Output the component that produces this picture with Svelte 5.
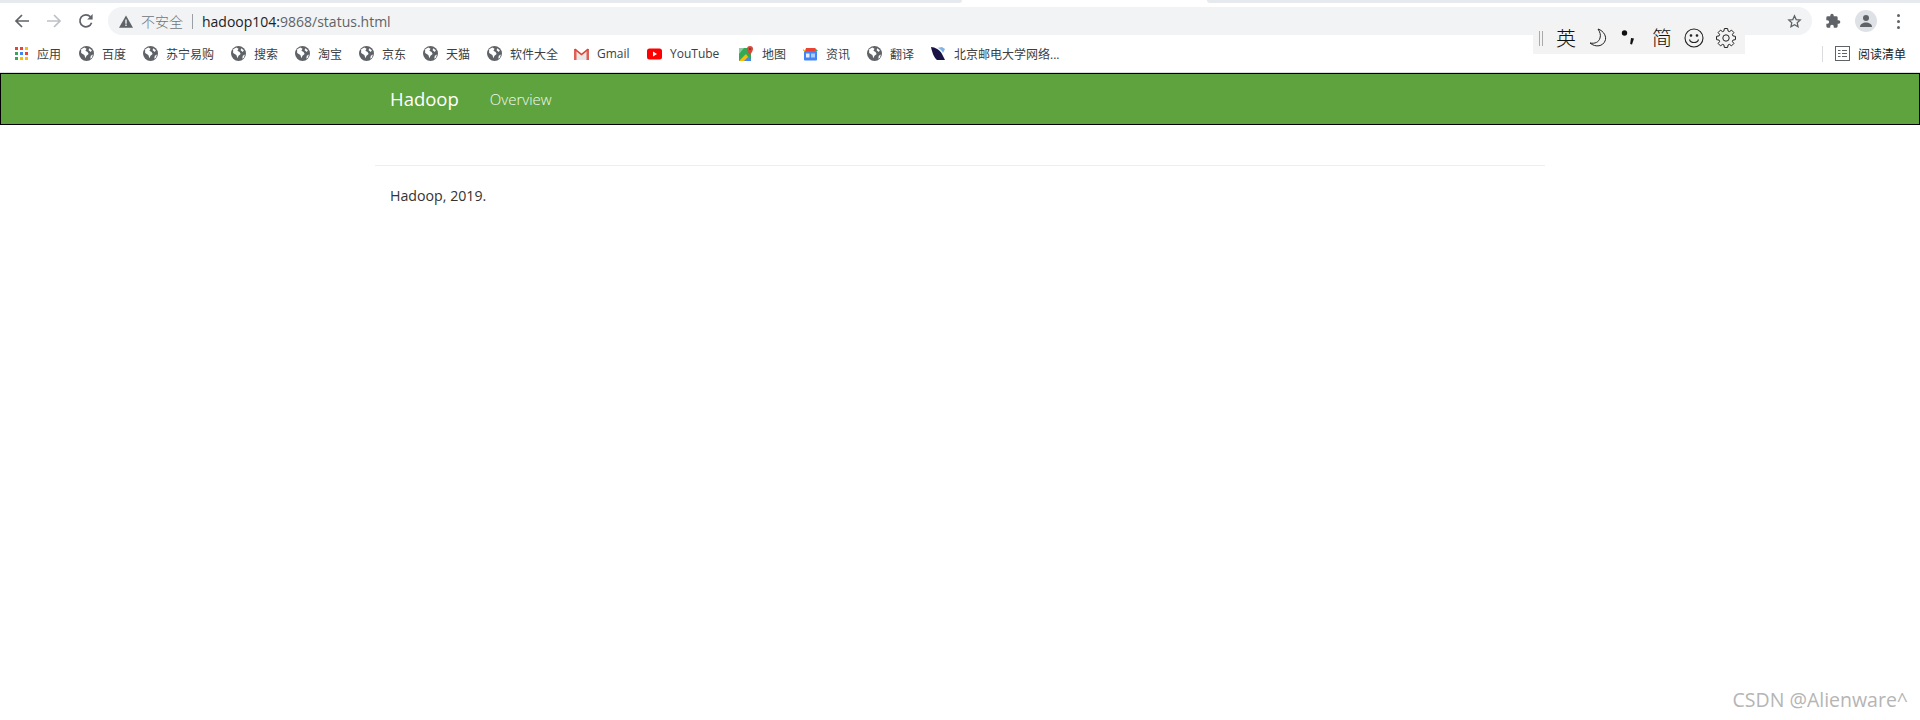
<script lang="ts">
	const bookmarks = [
		{ label: '百度', icon: 'globe', w: 64 },
		{ label: '苏宁易购', icon: 'globe', w: 88 },
		{ label: '搜索', icon: 'globe', w: 64 },
		{ label: '淘宝', icon: 'globe', w: 64 },
		{ label: '京东', icon: 'globe', w: 64 },
		{ label: '天猫', icon: 'globe', w: 64 },
		{ label: '软件大全', icon: 'globe', w: 87 },
		{ label: 'Gmail', icon: 'gmail', w: 73 },
		{ label: 'YouTube', icon: 'youtube', w: 92 },
		{ label: '地图', icon: 'maps', w: 64 },
		{ label: '资讯', icon: 'news', w: 64 },
		{ label: '翻译', icon: 'globe', w: 64 },
		{ label: '北京邮电大学网络...', icon: 'bupt', w: 150 }
	];

	// 8 tooth gear outline for the IME settings icon
	function gearPoints(): string {
		const pts: string[] = [];
		for (let i = 0; i < 8; i++) {
			const a = (i * Math.PI) / 4;
			for (const [r, d] of [
				[7.2, -0.3],
				[9.6, -0.17],
				[9.6, 0.17],
				[7.2, 0.3]
			]) {
				pts.push(`${(10 + r * Math.cos(a + d)).toFixed(2)},${(10 + r * Math.sin(a + d)).toFixed(2)}`);
			}
		}
		return pts.join(' ');
	}
</script>

<div class="page">
	<div class="tabstrip">
		<div class="tab-left"></div>
		<div class="tab-right"></div>
	</div>

	<!-- browser toolbar: nav buttons, address bar, extensions -->
	<div class="toolbar">
		<svg class="nav back" width="16" height="16" viewBox="0 0 16 16" fill="none" stroke="#5f6368" stroke-width="1.7">
			<path d="M15 8H2M8 2L2 8l6 6" />
		</svg>
		<svg class="nav" width="16" height="16" viewBox="0 0 16 16" fill="none" stroke="#bdc1c6" stroke-width="1.7">
			<path d="M1 8h13M8 2l6 6-6 6" />
		</svg>
		<svg class="nav reload" width="16" height="16" viewBox="0 0 16 16" fill="none" stroke="#5f6368" stroke-width="1.7">
			<path d="M13.6 9.8A6 6 0 1 1 12.4 3.8" />
			<path d="M14.6 1v5.4H9.2z" fill="#5f6368" stroke="none" />
		</svg>
		<div class="omnibox">
			<svg class="warn" width="14" height="13" viewBox="0 0 14 13">
				<path d="M7 0.5L14 12.7H0z" fill="#5f6368" />
				<path d="M6.3 4.6h1.4v4.2H6.3zM6.3 9.6h1.4v1.4H6.3z" fill="#f1f3f4" />
			</svg>
			<span class="insecure">不安全</span>
			<span class="sep"></span>
			<span class="url"><span class="host">hadoop104:</span>9868/status.html</span>
			<svg class="star" width="15" height="15" viewBox="0 0 24 24" fill="none" stroke="#5f6368" stroke-width="2">
				<path d="M12 3l2.7 6 6.500.7-4.900 4.300 1.400 6.400L12 17.100 6.300 20.400l1.400-6.400-4.900-4.300 6.500-.7z" />
			</svg>
		</div>
		<svg class="puzzle" width="16" height="16" viewBox="0 0 24 24" fill="#5f6368">
			<path d="M20.500 11H19V7a2 2 0 0 0-2-2h-4V3.500a2.500 2.500 0 0 0-5 0V5H4a2 2 0 0 0-2 2v3.800h1.500a2.700 2.700 0 0 1 0 5.400H2V20a2 2 0 0 0 2 2h3.800v-1.500a2.700 2.700 0 0 1 5.400 0V22H17a2 2 0 0 0 2-2v-4h1.500a2.500 2.500 0 0 0 0-5z" />
		</svg>
		<div class="avatar">
			<svg width="14" height="14" viewBox="0 0 14 14" fill="#5f6368">
				<circle cx="7" cy="4" r="3" />
				<path d="M1 13c0-3 3-4.500 6-4.500s6 1.500 6 4.500z" />
			</svg>
		</div>
		<div class="dots"><i></i><i></i><i></i></div>
	</div>

	<!-- bookmarks bar -->
	<div class="bookmarks">
		<div class="bm apps">
			<svg width="14" height="14" viewBox="0 0 14 14">
				<rect x="0" y="0" width="3" height="3" fill="#ea4335" />
				<rect x="5" y="0" width="3" height="3" fill="#ea4335" />
				<rect x="10" y="0" width="3" height="3" fill="#fbbc04" />
				<rect x="0" y="5" width="3" height="3" fill="#34a853" />
				<rect x="5" y="5" width="3" height="3" fill="#4285f4" />
				<rect x="10" y="5" width="3" height="3" fill="#ea4335" />
				<rect x="0" y="10" width="3" height="3" fill="#34a853" />
				<rect x="5" y="10" width="3" height="3" fill="#fbbc04" />
				<rect x="10" y="10" width="3" height="3" fill="#fbbc04" />
			</svg>
			<span>应用</span>
		</div>
		{#each bookmarks as b}
			<div class="bm" style="width: {b.w}px">
				{#if b.icon === 'globe'}
					<svg width="15" height="15" viewBox="0 0 14 14">
						<circle cx="7" cy="7" r="7" fill="#5f6368" />
						<path d="M2 3l3-1.500 2 1-1 2 2 1 1 2-2 1.500-1 2.500-1-3-3-2zM9.500 2l2.500 2-1 1.500-2-1.500zM11 9l2-1-1 3-1.500 1z" fill="#fff" />
					</svg>
				{:else if b.icon === 'gmail'}
					<svg width="15" height="12" viewBox="0 0 15 12">
						<path d="M0 1v11h15V1L7.500 7z" fill="#e8e8e8" />
						<path d="M0 12V1.500L1 1l1.500.5V12zM15 12V1.500L14 1l-1.500.5V12z" fill="#e06055" />
						<path d="M0 1.500L1.200 0.500 7.500 5.500 13.800 0.500 15 1.500 7.500 7.500z" fill="#db4437" />
					</svg>
				{:else if b.icon === 'youtube'}
					<svg width="15" height="12" viewBox="0 0 15 12">
						<rect x="0" y="0.500" width="15" height="11" rx="2.500" fill="#f00" />
						<path d="M6 3.500L10 6 6 8.500z" fill="#fff" />
					</svg>
				{:else if b.icon === 'maps'}
					<svg width="15" height="16" viewBox="0 0 15 16">
						<rect x="0" y="2" width="12" height="13" fill="#35a853" />
						<path d="M0 2h5L0 8z" fill="#8fc9a0" />
						<path d="M0 15l7-7 5 7z" fill="#fbbc04" />
						<path d="M5 15l4-4 3 2v2z" fill="#4285f4" />
						<path d="M11 0a3 3 0 0 1 3 3c0 2-3 6-3 6S8 5 8 3a3 3 0 0 1 3-3z" fill="#d9483b" />
						<circle cx="11" cy="3" r="1" fill="#8f2a20" />
					</svg>
				{:else if b.icon === 'news'}
					<svg width="15" height="14" viewBox="0 0 15 14">
						<path d="M2 4l1-3h9l1 3z" fill="#ea4335" />
						<path d="M0 2l3 2H0z" fill="#fbbc04" />
						<path d="M12 1l3 3h-3z" fill="#34a853" />
						<rect x="1" y="4" width="13" height="9.500" rx="1" fill="#4285f4" />
						<rect x="3" y="6.500" width="3.500" height="4" fill="#e8f0fe" />
						<rect x="8" y="6.500" width="4" height="4" fill="#aecbfa" />
					</svg>
				{:else}
					<svg width="15" height="15" viewBox="0 0 15 15">
						<path d="M0 1c4 0 9 3 11 7l3 6H6C3 12 1 6 0 1z" fill="#1a1446" />
						<path d="M6 2c2 0 5 2 6 5l2-4-3-2z" fill="#7fb4e8" />
					</svg>
				{/if}
				<span>{b.label}</span>
			</div>
		{/each}
		<div class="reading">
			<svg width="15" height="15" viewBox="0 0 15 15" fill="none" stroke="#5f6368">
				<rect x="0.500" y="0.500" width="14" height="14" />
				<path d="M3 4.500h2.500M3 7.500h2.500M3 10.500h2.500M7 4.500h5M7 7.500h5M7 10.500h5" />
			</svg>
			<span>阅读清单</span>
		</div>
	</div>

	<nav class="navbar">
		<div class="nav-inner">
			<span class="brand">Hadoop</span>
			<span class="nav-link">Overview</span>
		</div>
	</nav>

	<main class="container">
		<hr />
		<footer>Hadoop, 2019.</footer>
	</main>

	<!-- floating IME toolbar sits over the browser chrome -->
	<div class="ime">
		<span class="grip"></span>
		<span class="ime-item ime-text">英</span>
		<span class="ime-item">
			<svg width="20" height="20" viewBox="0 0 20 20" fill="none" stroke="#222" stroke-width="1">
				<path d="M10 1C16 3 19 9 17 13 15 18 8 20 2 15 7 16 11 14 12 10 13 7 12 4 10 1z" />
			</svg>
		</span>
		<span class="ime-item">
			<svg width="20" height="20" viewBox="0 0 20 20" fill="#111">
				<circle cx="4.500" cy="5" r="2.700" />
				<path d="M11 10l3 .5-2 6-1.800-.5z" />
			</svg>
		</span>
		<span class="ime-item ime-text">简</span>
		<span class="ime-item">
			<svg width="20" height="20" viewBox="0 0 20 20" fill="none" stroke="#222" stroke-width="1.100">
				<circle cx="10" cy="10" r="9" />
				<circle cx="7" cy="7.500" r="0.800" fill="#222" />
				<circle cx="13" cy="7.500" r="0.800" fill="#222" />
				<path d="M5.500 11.500c1 4 8 4 9 0" />
			</svg>
		</span>
		<span class="ime-item">
			<svg width="20" height="20" viewBox="0 0 20 20" fill="none" stroke="#222" stroke-width="1">
				<polygon points={gearPoints()} stroke-linejoin="round" />
				<circle cx="10" cy="10" r="3.200" />
			</svg>
		</span>
	</div>

	<div class="watermark">CSDN @Alienware^</div>
</div>

<style>
	:global(body) {
		margin: 0;
		background: #fff;
	}

	.page {
		position: relative;
		width: 1920px;
		height: 720px;
		overflow: hidden;
		font-family: 'Open Sans', 'Noto Sans CJK SC', sans-serif;
	}

	.tabstrip {
		display: flex;
		justify-content: space-between;
		height: 3px;
	}

	.tab-left {
		width: 962px;
		background: #e6e9ed;
		border-bottom-right-radius: 6px;
	}

	.tab-right {
		width: 713px;
		background: #e6e9ed;
		border-bottom-left-radius: 6px;
	}

	.toolbar {
		display: flex;
		align-items: center;
		height: 32px;
		padding-top: 4px;
		box-sizing: border-box;
	}

	.nav {
		flex-shrink: 0;
		margin-left: 16px;
	}

	.nav.back {
		margin-left: 14px;
	}

	.nav.reload {
		margin-right: 14px;
	}

	.omnibox {
		display: flex;
		align-items: center;
		flex-shrink: 0;
		width: 1704px;
		height: 28px;
		background: #f1f3f4;
		border-radius: 14px;
		padding-left: 11px;
		box-sizing: border-box;
	}

	.insecure {
		margin-left: 8px;
		color: #70757a;
		font-size: 14px;
		font-weight: 300;
	}

	.sep {
		width: 1px;
		height: 15px;
		background: #9aa0a6;
		margin: 0 9px;
	}

	.url {
		color: #5f6368;
		font-size: 14px;
	}

	.host {
		color: #202124;
	}

	.star {
		margin-left: auto;
		margin-right: 10px;
	}

	.puzzle {
		flex-shrink: 0;
		margin-left: 13px;
	}

	.avatar {
		display: flex;
		align-items: center;
		justify-content: center;
		flex-shrink: 0;
		width: 22px;
		height: 22px;
		border-radius: 50%;
		background: #dee1e6;
		margin-left: 14px;
	}

	.dots {
		display: flex;
		flex-direction: column;
		gap: 3px;
		margin-left: 20px;
	}

	.dots i {
		width: 3px;
		height: 3px;
		border-radius: 50%;
		background: #5f6368;
	}

	.bookmarks {
		display: flex;
		align-items: center;
		height: 38px;
		padding-left: 15px;
		font-size: 12px;
		color: #3c4043;
		box-sizing: border-box;
		border-bottom: 1px solid #dadce0;
	}

	.bm {
		display: flex;
		align-items: center;
		gap: 8px;
		flex-shrink: 0;
		white-space: nowrap;
	}

	.apps {
		width: 64px;
	}

	.reading {
		display: flex;
		align-items: center;
		gap: 8px;
		margin-left: auto;
		margin-right: 14px;
		padding-left: 12px;
		height: 16px;
		border-left: 1px solid #dadce0;
		color: #202124;
	}

	.navbar {
		height: 52px;
		box-sizing: border-box;
		background: #5fa33e;
		border: 1px solid #000;
	}

	.nav-inner {
		display: flex;
		align-items: center;
		width: 1170px;
		height: 100%;
		margin: 0 auto;
		padding-left: 15px;
		box-sizing: border-box;
		color: #fff;
	}

	.brand {
		font-size: 18.5px;
		margin-bottom: 2px;
	}

	.nav-link {
		font-size: 15px;
		margin-left: 31px;
		color: #f4f8f0;
		font-weight: 300;
	}

	.container {
		width: 1170px;
		margin: 0 auto;
	}

	hr {
		border: 0;
		border-top: 1px solid #eee;
		margin: 40px 0 0;
	}

	footer {
		padding: 20px 15px 0;
		font-size: 14.2px;
		line-height: 20px;
		color: #333;
	}

	.ime {
		position: absolute;
		left: 1533px;
		top: 22px;
		width: 212px;
		height: 32px;
		background: #f2f3f2;
		display: flex;
		align-items: center;
		padding-left: 6px;
		box-sizing: border-box;
	}

	.grip {
		width: 4px;
		height: 15px;
		margin-right: 7px;
		border-left: 1px solid #aaa;
		border-right: 1px solid #aaa;
		box-sizing: border-box;
	}

	.ime-item {
		display: flex;
		align-items: center;
		justify-content: center;
		width: 32px;
		flex-shrink: 0;
	}

	.ime-text {
		font-family: 'Noto Sans CJK SC', sans-serif;
		font-size: 20px;
		font-weight: 300;
		color: #111;
		line-height: 1;
	}

	.watermark {
		position: absolute;
		right: 12px;
		bottom: 7px;
		font-size: 19.5px;
		color: #b5b5b5;
	}
</style>
